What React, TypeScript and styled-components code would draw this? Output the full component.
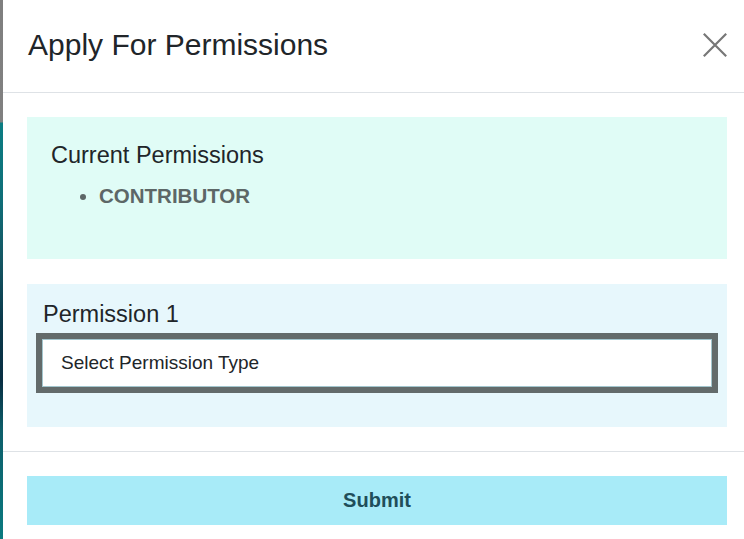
import React from "react";
import styled, { createGlobalStyle } from "styled-components";

const GlobalStyle = createGlobalStyle`
  html, body {
    margin: 0;
    padding: 0;
    height: 100%;
    overflow: hidden;
    background: #ffffff;
  }
  body {
    font-family: "Liberation Sans", Arial, Helvetica, sans-serif;
    color: #212529;
  }
  * { box-sizing: border-box; }
`;

const Page = styled.div`
  display: flex;
  align-items: stretch;
  height: 539px;
  width: 100vw;
  overflow: hidden;
`;

const Backdrop = styled.div`
  width: 3px;
  flex-shrink: 0;
  background: linear-gradient(
    to bottom,
    #7f7f7f 0px,
    #808080 122px,
    #0b7d83 123px,
    #0f6e78 200px,
    #145663 260px,
    #0b3a4c 320px,
    #082e42 380px,
    #0d5e6a 430px,
    #0a7a80 539px
  );
`;

const Modal = styled.div`
  width: 748px;
  flex-shrink: 0;
  background: #ffffff;
  display: flex;
  flex-direction: column;
  & > * {
    flex-shrink: 0;
  }
`;

const Header = styled.div`
  height: 93px;
  display: flex;
  align-items: center;
  justify-content: space-between;
  padding: 0 24px 0 25px;
  border-bottom: 1px solid #dee2e6;
`;

const Title = styled.h1`
  margin: 0;
  font-size: 30px;
  font-weight: 400;
  line-height: 36px;
  color: #212529;
  padding-bottom: 2px;
`;

const CloseButton = styled.button`
  width: 24px;
  height: 24px;
  padding: 0;
  margin: 0 0 2px 0;
  border: 0;
  background: transparent;
  display: flex;
  cursor: pointer;
`;

const Body = styled.div`
  display: flex;
  flex-direction: column;
  gap: 25px;
  padding: 24px;
  border-bottom: 1px solid #dee2e6;
  & > * {
    flex-shrink: 0;
  }
`;

const Panel = styled.section<{ $tone: "mint" | "sky" }>`
  background: ${(p) => (p.$tone === "mint" ? "#e0fcf6" : "#e7f7fc")};
`;

const CurrentPanel = styled(Panel)`
  height: 142px;
  padding: 24px 24px 0 24px;
`;

const PanelTitle = styled.h2`
  margin: 0;
  font-size: 23.5px;
  font-weight: 400;
  line-height: 28px;
  color: #212529;
`;

const PermList = styled.ul`
  margin: 15px 0 0 0;
  padding-left: 48px;
  color: #5d6767;
`;

const PermItem = styled.li`
  font-size: 20.5px;
  font-weight: 700;
  line-height: 24px;
`;

const RequestPanel = styled(Panel)`
  height: 143px;
  padding: 16px 9px 0 9px;
  display: flex;
  flex-direction: column;
`;

const FieldLabel = styled.label`
  font-size: 23.5px;
  line-height: 28px;
  padding-left: 7px;
  margin-bottom: 5px;
  color: #212529;
`;

const SelectBox = styled.div`
  height: 60px;
  flex-shrink: 0;
  border: 6px solid #636b6b;
  box-shadow: inset 0 0 0 1px #a3c6ce;
  background: #ffffff;
  display: flex;
  align-items: center;
  padding: 0 19px;
  font-size: 19px;
  color: #212529;
  cursor: pointer;
`;

const Footer = styled.div`
  padding: 24px;
`;

const SubmitButton = styled.button`
  display: block;
  width: 100%;
  height: 49px;
  border: 0;
  background: #a8ebf8;
  color: #1f4e5a;
  font-family: "Liberation Sans", Arial, Helvetica, sans-serif;
  font-size: 20px;
  font-weight: 700;
  cursor: pointer;
`;

export default function App() {
  return (
    <>
      <GlobalStyle />
      <Page>
        <Backdrop />
        <Modal role="dialog" aria-labelledby="dlg-title">
          <Header>
            <Title id="dlg-title">Apply For Permissions</Title>
            <CloseButton aria-label="Close">
              <svg width="24" height="24" viewBox="0 0 24 24">
                <path
                  d="M0.8 0.8 L23.2 23.2 M23.2 0.8 L0.8 23.2"
                  stroke="#777777"
                  strokeWidth="2.2"
                  fill="none"
                />
              </svg>
            </CloseButton>
          </Header>
          <Body>
            <CurrentPanel $tone="mint">
              <PanelTitle>Current Permissions</PanelTitle>
              <PermList>
                <PermItem>CONTRIBUTOR</PermItem>
              </PermList>
            </CurrentPanel>
            <RequestPanel $tone="sky">
              <FieldLabel>Permission 1</FieldLabel>
              <SelectBox role="combobox" aria-expanded="false">
                Select Permission Type
              </SelectBox>
            </RequestPanel>
          </Body>
          <Footer>
            <SubmitButton>Submit</SubmitButton>
          </Footer>
        </Modal>
      </Page>
    </>
  );
}
